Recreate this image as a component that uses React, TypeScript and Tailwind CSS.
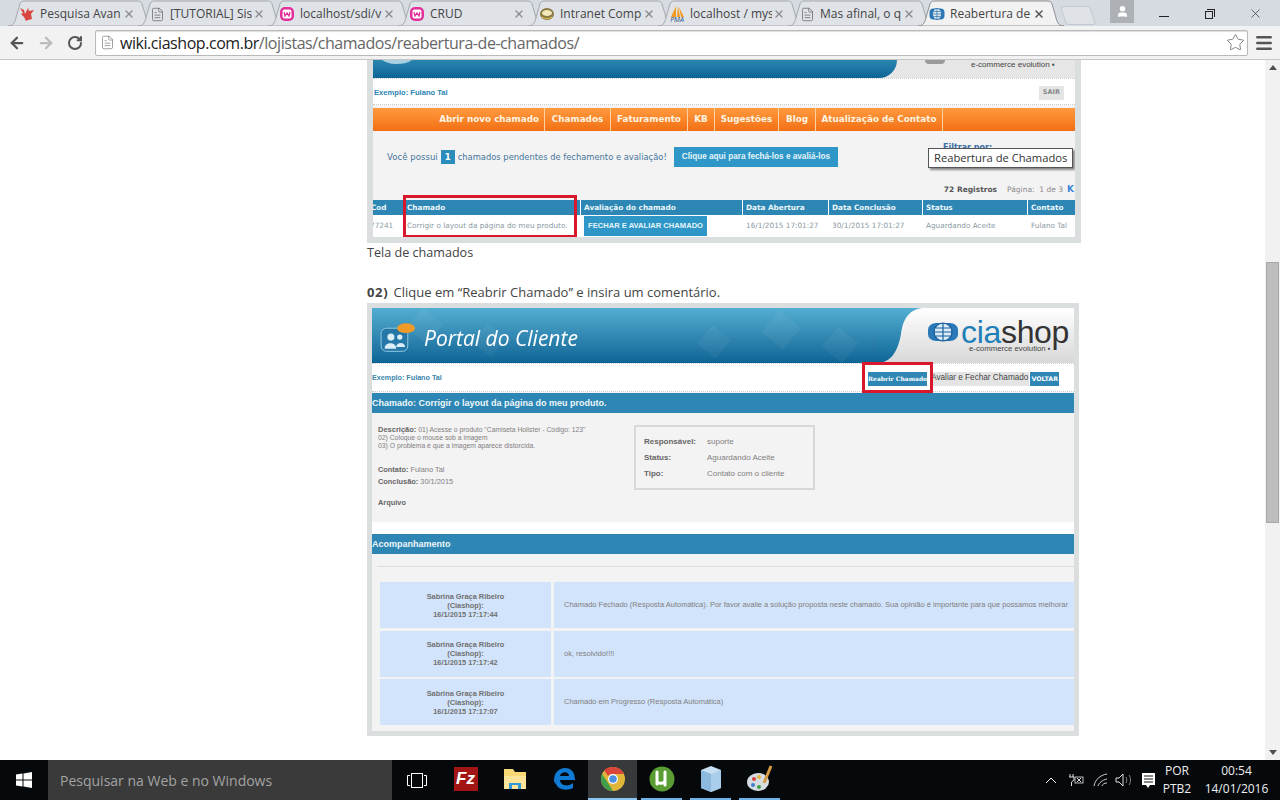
import { ArrowLeft, ArrowRight, FileText, Menu, RotateCw, Star, User, X } from "lucide-react";

const Wamp = () => (
  <svg width="16" height="16" viewBox="0 0 16 16">
    <rect x="1" y="1" width="14" height="14" rx="5" fill="#e52e9a" />
    <rect x="3.5" y="3.5" width="9" height="9" rx="2" fill="#fff" />
    <path d="M5 6l1 4 2-3 2 3 1-4" fill="none" stroke="#e52e9a" strokeWidth="1.3" />
  </svg>
);

const Globe = ({ w = 16, h = 16 }: { w?: number; h?: number }) => (
  <svg width={w} height={h} viewBox="0 0 16 16" preserveAspectRatio="none">
    <rect x="0.5" y="2.5" width="15" height="11" rx="4" fill="#2a78b8" />
    <ellipse cx="8" cy="8" rx="4.5" ry="5.5" fill="#d9ecf7" stroke="#1d5f9a" strokeWidth=".7" />
    <path d="M8 2.5v11M3.5 8h9M4.500 5.500h7M4.500 10.500h7" stroke="#1d5f9a" strokeWidth=".6" />
  </svg>
);

const tabs = [
  {
    title: "Pesquisa Avan",
    icon: (
      <svg width="16" height="16" viewBox="0 0 16 16">
        <path d="M1 2l4 2 1 4 3-6 1 3 5-1-3 4 1 5-4 1-2 1-2-4-3-3 2-1z" fill="#d8473f" />
      </svg>
    ),
  },
  { title: "[TUTORIAL] Sis", icon: <FileText size={15} strokeWidth={1.2} color="#666" /> },
  { title: "localhost/sdi/v", icon: <Wamp /> },
  { title: "CRUD", icon: <Wamp /> },
  {
    title: "Intranet Comp",
    icon: (
      <svg width="16" height="16" viewBox="0 0 16 16">
        <ellipse cx="8" cy="8" rx="7" ry="6" fill="#8a7a45" />
        <ellipse cx="8" cy="7" rx="5" ry="3" fill="#f3e9b8" />
        <path d="M3 11c3 2 7 2 10 0" stroke="#e7c34a" fill="none" />
      </svg>
    ),
  },
  {
    title: "localhost / mys",
    icon: (
      <div className="flex flex-col items-center">
        <svg width="16" height="11" viewBox="0 0 16 11">
          <path d="M2 11L7 0v11zM8 11l1-11 2 11zM12 11L10 1l5 10z" fill="#f29a1f" />
        </svg>
        <span className="text-[7px] leading-[6px] italic text-[#2b4f80]">PMA</span>
      </div>
    ),
  },
  { title: "Mas afinal, o q", icon: <FileText size={15} strokeWidth={1.2} color="#666" /> },
];

const TabShape = ({ active }: { active?: boolean }) => (
  <svg className="absolute inset-0 h-full w-full" viewBox="0 0 146 26" preserveAspectRatio="none">
    <path
      d="M0 26C6 26 7 22 9 14L12 4C13 1 15 1 18 1H128C131 1 133 1 134 4L137 14C139 22 140 26 146 26Z"
      fill={active ? "#f2f2f2" : "#dfe3e8"}
      stroke={active ? "#8d8f92" : "#a6a9ad"}
      strokeWidth="1"
    />
  </svg>
);

const Tab = ({ title, icon, active }: { title: string; icon: React.ReactNode; active?: boolean }) => (
  <div className="relative -mr-[16px] h-[26px] w-[146px] shrink-0">
    <TabShape active={active} />
    <div className="relative flex h-full items-center pl-[11px] pr-[19px] pt-[2px]">
      <div className="flex w-[16px] shrink-0 justify-center">{icon}</div>
      <div className="ml-[5px] w-[82px] overflow-hidden whitespace-nowrap text-[12px] text-[#444]">{title}</div>
      <X size={12} strokeWidth={active ? 3 : 2.4} color={active ? "#555" : "#888"} className="ml-auto" />
    </div>
  </div>
);

const Browser = () => (
  <header className="bg-[#d6dbe2]">
    <div className="flex h-[26px] items-start pl-[8px]">
      <div className="flex">
        {tabs.map((t) => (
          <Tab key={t.title} title={t.title} icon={t.icon} />
        ))}
        <Tab title="Reabertura de" icon={<Globe />} active />
      </div>
      <div className="ml-[15px] mt-[6px] h-[19px] w-[30px] skew-x-[18deg] rounded-[3px] border border-[#c3c9d0] bg-[#dfe3e8]" />
      <div className="ml-[17px] flex h-[23px] w-[24px] items-center justify-center bg-[#adb1b5]">
        <User size={13} color="#fff" fill="#fff" />
      </div>
      <div className="ml-[25px] mt-[16px] h-px w-[10px] bg-[#222]" />
      <div className="relative ml-[36px] mt-[9px] h-[10px] w-[10px]">
        <div className="absolute left-0 top-[2px] h-[8px] w-[8px] border border-[#222] bg-[#d6dbe2]" />
        <div className="absolute left-[2px] top-0 h-[8px] w-[8px] border-r border-t border-[#222]" />
      </div>
      <X size={15} strokeWidth={1} color="#222" className="ml-[33px] mt-[6px]" />
    </div>
    <div className="flex h-[34px] items-center border-b border-[#c6c6c6] bg-[#f2f2f2]">
      <ArrowLeft size={18} strokeWidth={3} color="#555" className="ml-[8px]" />
      <ArrowRight size={18} strokeWidth={3} color="#bcbcbc" className="ml-[11px]" />
      <RotateCw size={16} strokeWidth={3} color="#555" className="ml-[12px]" />
      <div className="ml-[12px] flex h-[26px] w-[1153px] items-center rounded-[2px] border border-[#b9b9b9] bg-white shadow-[inset_0_1px_1px_#ddd]">
        <FileText size={15} strokeWidth={1.1} color="#777" className="ml-[4px]" />
        <div className="ml-[5px] whitespace-nowrap text-[16px] tracking-[-0.028em] text-[#666]">
          <span className="text-[#222]">wiki.ciashop.com.br</span>/lojistas/chamados/reabertura-de-chamados/
        </div>
        <Star size={19} strokeWidth={1} color="#666" className="ml-auto mr-[2px]" />
      </div>
      <Menu size={20} strokeWidth={3} color="#555" className="ml-[6px]" />
    </div>
  </header>
);

const Tiles = () => (
  <svg className="absolute inset-0 h-full w-full" viewBox="0 0 505 55" preserveAspectRatio="none">
    <g fill="#fff" opacity=".05">
      <rect x="40" y="5" width="26" height="26" transform="rotate(40 53 18)" />
      <rect x="105" y="20" width="24" height="24" transform="rotate(40 117 32)" />
      <rect x="330" y="22" width="24" height="24" transform="rotate(40 342 34)" />
      <rect x="395" y="8" width="28" height="28" transform="rotate(40 409 22)" />
      <rect x="455" y="24" width="26" height="26" transform="rotate(40 468 37)" />
    </g>
  </svg>
);

const PortalBanner = () => (
  <div className="flex h-[55px] bg-gradient-to-b from-white to-[#d8d8d8]">
    <div className="relative flex w-[505px] shrink-0 items-center bg-gradient-to-b from-[#53aed2] to-[#0c6595]">
      <Tiles />
      <svg width="36" height="32" viewBox="0 0 40 36" className="relative ml-[8px] mt-[4px]">
        <rect x="1" y="7" width="30" height="26" rx="6" fill="#2577a8" stroke="#9cd0e6" />
        <circle cx="12" cy="17" r="4" fill="#d9eef7" />
        <circle cx="22" cy="17" r="3" fill="#d9eef7" />
        <path d="M5 30c0-8 13-8 13 0zM18 28c0-6 10-6 10 0z" fill="#d9eef7" />
        <ellipse cx="29" cy="7" rx="10" ry="5.500" fill="#f09a2a" />
      </svg>
      <span className="relative ml-[8px] pt-[6px] font-['Open_Sans',sans-serif] text-[21px] font-medium italic text-white">
        Portal do Cliente
      </span>
    </div>
    <svg width="45" height="55" viewBox="0 0 45 55" className="shrink-0">
      <defs>
        <linearGradient id="portalCurve" x1="0" y1="0" x2="0" y2="1">
          <stop offset="0" stopColor="#53aed2" />
          <stop offset="1" stopColor="#0c6595" />
        </linearGradient>
      </defs>
      <path d="M0 0H45C31 2 26 12 24 26 21 43 14 55 0 55Z" fill="url(#portalCurve)" />
    </svg>
    <div className="flex flex-1 flex-col pt-[11px] font-['Liberation_Sans',sans-serif]">
      <div className="flex h-[26px] items-center pl-[5px]">
        <Globe w={32} h={26} />
        <span className="ml-[2px] text-[32px] leading-[26px] tracking-[-0.01em]">
          <span className="text-[#1f7fb8]">cia</span>
          <span className="text-[#333]">shop</span>
        </span>
      </div>
      <div className="pl-[47px] text-[7.800px] leading-[8px] text-[#444]">e-commerce evolution ▪</div>
    </div>
  </div>
);

const CroppedBanner = () => (
  <div className="flex h-[18px] bg-[#e6e6e6]">
    <div className="w-[524px] shrink-0 rounded-br-[22px] bg-gradient-to-b from-[#2a85b0] to-[#0c6595]">
      <svg width="30" height="4" viewBox="0 0 30 4" className="ml-[9px] block">
        <path d="M0 0h30c-4 3-10 4-16 4S3 2 0 0z" fill="#a9cfe2" />
      </svg>
    </div>
    <div className="flex flex-1 items-start">
      <div className="ml-[28px] h-[4px] w-[20px] rounded-b-full bg-[#9a9a9a]" />
      <div className="ml-[26px] whitespace-nowrap font-['Liberation_Sans',sans-serif] text-[8px] leading-[9px] text-[#444]">
        e-commerce evolution ▪
      </div>
    </div>
  </div>
);

const navItems = [
  { label: "Abrir novo chamado", w: "w-[172px] pr-[5px] justify-end" },
  { label: "Chamados", w: "w-[66px] justify-center" },
  { label: "Faturamento", w: "w-[77px] justify-center" },
  { label: "KB", w: "w-[27px] justify-center" },
  { label: "Sugestões", w: "w-[64px] justify-center" },
  { label: "Blog", w: "w-[37px] justify-center" },
  { label: "Atualização de Contato", w: "w-[127px] justify-center" },
];

const ticketCols = [
  { head: "Cod", val: "77241", w: "w-[31px]" },
  { head: "Chamado", val: "Corrigir o layout da página do meu produto.", w: "w-[177px]" },
  { head: "Avaliação do chamado", val: "", w: "w-[162px]" },
  { head: "Data Abertura", val: "16/1/2015 17:01:27", w: "w-[86px]" },
  { head: "Data Conclusão", val: "30/1/2015 17:01:27", w: "w-[94px]" },
  { head: "Status", val: "Aguardando Aceite", w: "w-[105px]" },
  { head: "Contato", val: "Fulano Tal", w: "w-[48px]" },
];

const ChamadosShot = () => (
  <div className="relative h-[183px] w-[714px] overflow-hidden border-x-[6px] border-b-[6px] border-[#dadedf] bg-[#f4f3f4] font-['DejaVu_Sans',sans-serif] text-[8px]">
    <CroppedBanner />
    <div className="flex h-[27px] items-center justify-between border-y border-dotted border-[#ccc] bg-white pl-px pr-[11px] pt-[3px]">
      <span className="font-['Liberation_Sans',sans-serif] text-[7.600px] font-bold text-[#2c86b4]">Exemplo: Fulano Tal</span>
      <span className="bg-[#e4e6e6] px-[4px] py-[2px] text-[6.500px] font-bold text-[#888]">SAIR</span>
    </div>
    <div className="mt-[3px] flex h-[23px] bg-gradient-to-b from-[#ff9a3c] to-[#f26f12] text-[8.800px] font-bold text-[#fff3e0]">
      {navItems.map((n) => (
        <div key={n.label} className={`flex items-center whitespace-nowrap border-r border-[#ffd0a0] ${n.w}`}>
          {n.label}
        </div>
      ))}
    </div>
    <div className="flex h-[48px] items-center pl-[14px] pt-[4px] text-[8.600px] text-[#44759a]">
      <span>Você possui</span>
      <span className="mx-[3px] bg-[#2c8dbd] px-[4px] py-px font-bold text-white">1</span>
      <span className="text-[8.350px]">chamados pendentes de fechamento e avaliação!</span>
      <span className="ml-[7px] flex h-[20px] items-center bg-[#2f97c7] px-[8px] font-['Liberation_Sans',sans-serif] text-[8.200px] font-bold text-[#e5f4fa]">
        Clique aqui para fechá-los e avaliá-los
      </span>
    </div>
    <div className="mb-[2px] mt-[3px] flex h-[16px] items-center justify-end pr-px text-[7.500px]">
      <span className="font-bold text-[#555]">72 Registros</span>
      <span className="ml-[10px] text-[#888]">Página:&nbsp; 1 de 3</span>
      <span className="ml-[4px] text-[9px] font-bold text-[#3c87d8]">K</span>
    </div>
    <div className="flex h-[15px] bg-[#2d86b3] text-[7.300px] font-bold text-[#eaf6fb]">
      {ticketCols.map((c, i) => (
        <div key={c.head} className={`flex shrink-0 items-center overflow-hidden whitespace-nowrap border-r border-white pl-[3px] pt-px ${c.w}`}>
          <span className={i === 0 ? "-ml-[5px]" : ""}>{c.head}</span>
        </div>
      ))}
    </div>
    <div className="flex h-[22px] bg-white text-[7.300px] text-[#8a9aa3]">
      {ticketCols.map((c, i) => (
        <div key={c.head} className={`flex shrink-0 items-center overflow-hidden whitespace-nowrap pl-[3px] ${c.w}`}>
          {c.val ? (
            <span className={i === 0 ? "-ml-[6px]" : ""}>{c.val}</span>
          ) : (
            <span className="flex h-[20px] items-center bg-[#2f97c7] px-[4px] font-['Liberation_Sans',sans-serif] text-[7.600px] font-bold text-[#e5f4fa]">
              FECHAR E AVALIAR CHAMADO
            </span>
          )}
        </div>
      ))}
    </div>
    <div className="absolute left-[570px] top-[82px] text-[8px] font-bold text-[#3a6ea5]">Filtrar por:</div>
    <div className="absolute left-[555px] top-[88px] whitespace-nowrap border border-[#555] bg-white px-[5px] py-px font-['Open_Sans',sans-serif] text-[11.200px] leading-[16px] text-[#333] shadow-[2px_2px_2px_#888]">
      Reabertura de Chamados
    </div>
    <div className="absolute left-[30px] top-[135px] h-[43px] w-[174px] border-[3px] border-[#d9182d]" />
  </div>
);

const tracking = [
  {
    when: "16/1/2015 17:17:44",
    msg: "Chamado Fechado (Resposta Automática). Por favor avalie a solução proposta neste chamado. Sua opinião é importante para que possamos melhorar",
  },
  { when: "16/1/2015 17:17:42", msg: "ok, resolvido!!!!" },
  { when: "16/1/2015 17:17:07", msg: "Chamado em Progresso (Resposta Automática)" },
];

const DetalheShot = () => (
  <div className="relative w-[712px] border-[5px] border-[#dadedf] bg-[#f4f3f4] font-['Liberation_Sans',sans-serif] text-[#808080]">
    <PortalBanner />
    <div className="flex h-[29px] items-center justify-between border-y border-dotted border-[#ccc] bg-white pr-[15px] pt-[2px]">
      <span className="text-[7.200px] font-bold text-[#3a86ad]">Exemplo: Fulano Tal</span>
      <div className="flex items-center">
        <span className="flex h-[14px] items-center bg-[#2d86b3] font-['DejaVu_Serif',serif] text-[6px] font-bold text-white">Reabrir Chamado</span>
        <span className="ml-[3px] flex h-[14px] items-center bg-[#e4e4e4] px-px text-[8.200px] text-[#444]">Avaliar e Fechar Chamado</span>
        <span className="ml-px flex h-[14px] items-center bg-[#2d86b3] px-px font-['DejaVu_Sans',sans-serif] text-[6.300px] font-bold text-white">VOLTAR</span>
      </div>
    </div>
    <div className="mt-px flex h-[20px] items-center bg-[#2d86b3] pt-px text-[9px] font-bold text-[#eef7fb]">
      Chamado: Corrigir o layout da página do meu produto.
    </div>
    <div className="flex h-[109px] items-start pl-[6px] pt-[12px]">
      <div className="mt-px w-[256px]">
        <div className="text-[6.800px] leading-[8px]">
          <span className="text-[7.500px] font-bold text-[#666]">Descrição:</span> 01) Acesse o produto "Camiseta Holister - Código: 123"
          <br />
          02) Coloque o mouse sob a imagem
          <br />
          03) O problema é que a imagem aparece distorcida.
        </div>
        <div className="mt-[14px] text-[7.400px] leading-[12px]">
          <div>
            <b className="text-[#666]">Contato:</b> Fulano Tal
          </div>
          <div>
            <b className="text-[#666]">Conclusão:</b> 30/1/2015
          </div>
          <div className="mt-[9px] font-bold text-[#666]">Arquivo</div>
        </div>
      </div>
      <div className="flex h-[65px] w-[181px] flex-col justify-center gap-[4px] border-2 border-[#d8d8d8] pl-[8px] text-[8px]">
        {[
          ["Responsável:", "suporte"],
          ["Status:", "Aguardando Aceite"],
          ["Tipo:", "Contato com o cliente"],
        ].map(([k, v]) => (
          <div key={k} className="flex h-[12px] items-center">
            <span className="w-[63px] font-bold text-[#666]">{k}</span>
            <span>{v}</span>
          </div>
        ))}
      </div>
    </div>
    <div className="h-[12px] bg-white" />
    <div className="flex h-[20px] items-center bg-[#2d86b3] pt-px text-[9px] font-bold text-[#eef7fb]">Acompanhamento</div>
    <div className="ml-[5px] mt-[12px] h-px bg-[#dcdcdc]" />
    <div className="flex flex-col gap-[2.500px] pb-[6px] pl-[8px] pt-[15px]">
      {tracking.map((t) => (
        <div key={t.when} className="flex h-[46px] gap-[3px] text-[7.500px]">
          <div className="flex w-[171px] shrink-0 items-center justify-center bg-[#d2e4fb] text-center font-bold leading-[9px] text-[#707070]">
            <div className="text-[7.400px]">
              Sabrina Graça Ribeiro
              <br />
              (Ciashop):
              <br />
              {t.when}
            </div>
          </div>
          <div className="flex min-w-0 flex-1 items-center overflow-hidden whitespace-nowrap bg-[#d2e4fb] pl-[10px]">{t.msg}</div>
        </div>
      ))}
    </div>
    <div className="absolute left-[490px] top-[54px] h-[31px] w-[71px] border-[3px] border-[#d9182d]" />
  </div>
);

const Scrollbar = () => (
  <div className="flex w-[15px] shrink-0 flex-col bg-[#f1f1f1]">
    <div className="flex h-[15px] items-center justify-center">
      <svg width="8" height="5" viewBox="0 0 8 5">
        <path d="M4 0l4 5H0z" fill="#505050" />
      </svg>
    </div>
    <div className="mt-[187px] h-[261px] w-[13px] self-center border border-[#a8a8a8] bg-[#bdbdbd]" />
    <div className="mt-auto flex h-[15px] items-center justify-center">
      <svg width="8" height="5" viewBox="0 0 8 5">
        <path d="M4 5l4-5H0z" fill="#505050" />
      </svg>
    </div>
  </div>
);

const Page = () => (
  <div className="flex h-[700px] overflow-hidden bg-white">
    <main className="flex-1 pl-[367px] font-['Open_Sans',sans-serif] text-[#444]">
      <ChamadosShot />
      <p className="h-[20px] pt-px text-[12.600px] leading-[18px]">Tela de chamados</p>
      <p className="mt-[20px] h-[20px] text-[13px] leading-[18px]">
        <b className="mr-[2px] tracking-[0.05em]">02)</b> Clique em “Reabrir Chamado” e insira um comentário.
      </p>
      <DetalheShot />
    </main>
    <Scrollbar />
  </div>
);

const TrayIcons = () => (
  <div className="ml-auto flex items-center text-white">
    <svg width="12" height="8" viewBox="0 0 12 8" className="mr-[11px]">
      <path d="M1 7l5-5 5 5" fill="none" stroke="#fff" />
    </svg>
    <svg width="16" height="14" viewBox="0 0 16 14" className="mr-[9px]">
      <path d="M2 1v3M5 1v3M1 4h5v3L3.500 9v4" fill="none" stroke="#ddd" />
      <rect x="7" y="4" width="8" height="6" fill="none" stroke="#bbb" />
      <path d="M9 5l4 4M13 5l-4 4" stroke="#ddd" />
    </svg>
    <svg width="15" height="14" viewBox="0 0 15 14" className="mr-[7px]">
      <path d="M1 13C2 7 7 2 14 1M5 13c1-3 4-6 9-7M9 13c1-2 2-3 5-3" fill="none" stroke="#ccc" />
    </svg>
    <svg width="17" height="14" viewBox="0 0 17 14" className="mr-[9px]">
      <path d="M1 5h3l4-4v12l-4-4H1z" fill="none" stroke="#ddd" />
      <path d="M11 4c1 2 1 4 0 6M14 2c2 3 2 7 0 10" fill="none" stroke="#888" />
    </svg>
    <svg width="15" height="17" viewBox="0 0 15 17" className="mr-[4px]">
      <path d="M1 1h13v12H9l-2 3-2-3H1z" fill="#fff" />
      <path d="M3 4h9M3 7h9M3 10h9" stroke="#111" />
    </svg>
    <div className="w-[34px] text-center text-[12px] leading-[18px] text-[#eee]">
      POR
      <br />
      PTB2
    </div>
    <div className="ml-[8px] w-[70px] pr-[1px] text-center text-[12px] leading-[18px] text-[#eee]">
      00:54
      <br />
      14/01/2016
    </div>
    <div className="w-[8px]" />
  </div>
);

const AppIcon = ({ children, open, active }: { children: React.ReactNode; open?: boolean; active?: boolean }) => (
  <div className={`h-full w-[49px] ${active ? "bg-[#37393b]" : open ? "px-[4px]" : ""}`}>
    <div className={`flex h-full flex-col items-center justify-center border-b-2 ${active ? "border-[#8ac4f0]" : open ? "border-[#6fb3e8]" : "border-transparent"}`}>
      {children}
    </div>
  </div>
);

const Taskbar = () => (
  <footer className="flex h-[40px] items-center bg-[#05090c] font-['Open_Sans',sans-serif]">
    <div className="flex w-[48px] justify-center">
      <svg width="16" height="16" viewBox="0 0 16 16">
        <path d="M0 2.500l6.500-1v6H0zM7.500 1.400L16 0v7.500H7.500zM0 8.500h6.500v6l-6.500-1zM7.500 8.500H16V16l-8.500-1.400z" fill="#fff" />
      </svg>
    </div>
    <div className="flex h-full w-[344px] items-center bg-[#3a3a3a] pl-[12px] text-[14px] text-[#a3a3a3]">
      Pesquisar na Web e no Windows
    </div>
    <div className="flex h-full w-[49px] items-center justify-center">
      <svg width="20" height="15" viewBox="0 0 20 15">
        <rect x="4.500" y=".5" width="11" height="14" fill="none" stroke="#fff" />
        <path d="M3 2.500H.5v10H3M17 2.500h2.500v10H17" fill="none" stroke="#fff" />
      </svg>
    </div>
    <AppIcon>
      <div className="flex h-[24px] w-[24px] items-center justify-center bg-[#a31515] font-['Liberation_Sans',sans-serif] text-[17px] font-bold italic text-white">
        Fz
      </div>
    </AppIcon>
    <AppIcon>
      <svg width="24" height="22" viewBox="0 0 24 22">
        <path d="M1 1h9l2 3h11v17H1z" fill="#f8d775" />
        <rect x="1" y="8" width="22" height="13" fill="#fbe39a" />
        <rect x="6" y="15" width="12" height="6" fill="#2f9bd6" />
        <rect x="9" y="17" width="6" height="4" fill="#fbe39a" />
      </svg>
    </AppIcon>
    <AppIcon>
      <svg width="24" height="24" viewBox="0 0 24 24">
        <path
          d="M2 13C2 5 8 1 13 1c6 0 10 4 10 12H8c0 6 9 7 13 3v5c-6 3-15 2-17-4C2 15 2 14 2 13zm6-4h9c0-5-8-5-9 0z"
          fill="#0f7bd4"
        />
      </svg>
    </AppIcon>
    <AppIcon active>
      <svg width="26" height="26" viewBox="0 0 26 26">
        <circle cx="13" cy="13" r="12" fill="#e0b53a" />
        <path d="M13 1a12 12 0 0 1 11 7H13a5 5 0 0 0-5 2L4 4a12 12 0 0 1 9-3z" fill="#d9453a" />
        <path d="M2 8l6 9 5 8A12 12 0 0 1 2 8z" fill="#3f9f4a" />
        <circle cx="13" cy="13" r="5" fill="#fff" />
        <circle cx="13" cy="13" r="3.800" fill="#4a8fe0" />
      </svg>
    </AppIcon>
    <AppIcon open>
      <svg width="26" height="26" viewBox="0 0 26 26">
        <circle cx="13" cy="13" r="12.500" fill="#5a9e33" />
        <path d="M8 6v12M8 15c0 3 7 3 8 0M16 6v13" fill="none" stroke="#fff" strokeWidth="3" strokeLinecap="round" />
      </svg>
    </AppIcon>
    <AppIcon open>
      <svg width="24" height="28" viewBox="0 0 24 28">
        <path d="M12 1l10 4v18l-10 4-10-4V5z" fill="#c8e0f4" />
        <path d="M12 9v18l-10-4V5z" fill="#8db9de" />
        <path d="M12 9l10-4v18l-10 4z" fill="#a9cdea" />
      </svg>
    </AppIcon>
    <AppIcon open>
      <svg width="28" height="28" viewBox="0 0 28 28">
        <ellipse cx="12" cy="17" rx="11" ry="9" fill="#d6dde2" />
        <circle cx="8" cy="14" r="2" fill="#d9453a" />
        <circle cx="13" cy="12" r="2" fill="#e0b53a" />
        <circle cx="7" cy="20" r="2" fill="#3f7fd0" />
        <circle cx="13" cy="22" r="2" fill="#3f9f4a" />
        <path d="M25 1l-7 17" stroke="#d79a44" strokeWidth="3" />
      </svg>
    </AppIcon>
    <TrayIcons />
  </footer>
);

export default function App() {
  return (
    <div className="h-[800px] w-[1280px] overflow-hidden font-['Open_Sans',sans-serif]">
      <Browser />
      <Page />
      <Taskbar />
    </div>
  );
}
